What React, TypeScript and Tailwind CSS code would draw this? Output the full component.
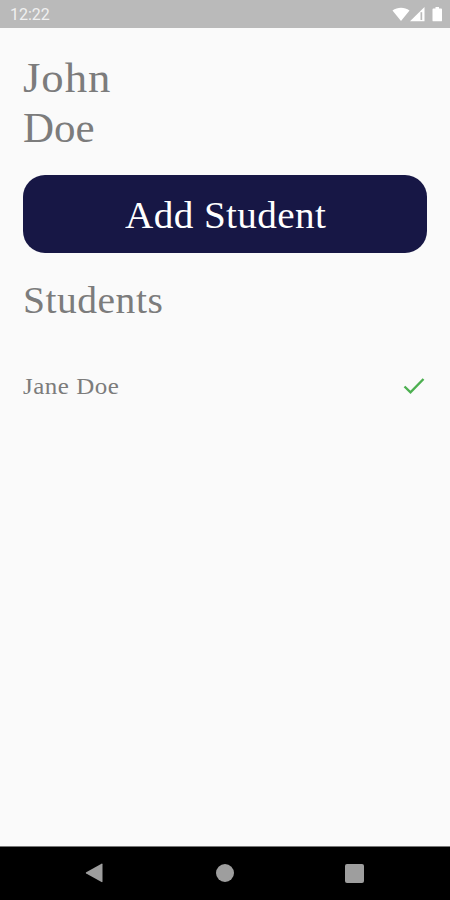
const students = [{ name: "Jane Doe", checkedIn: true }];

function StatusBar() {
  return (
    <div className="flex h-7 shrink-0 items-center justify-between bg-[#bababa] pl-[10px] pr-[7px] text-white">
      <span className="pt-[2px] font-[Roboto,sans-serif] text-[16px] leading-none text-[#f0f0f0]">
        12:22
      </span>
      <div className="flex items-center pt-px">
        <svg className="h-[15px] w-[18px]" viewBox="0 0 18 15" fill="currentColor">
          <path d="M.5 3.5C5.5-.3 12.5-.3 17.5 3.5L9 14z" />
        </svg>
        <svg className="h-[15px] w-[15px]" viewBox="0 0 15 15" fill="currentColor">
          <path d="M0 14.3 14.5 0v14.3z" />
          <path d="M10.5 5.2h1.7v7.8h-1.7z" fill="#bababa" />
        </svg>
        <svg className="ml-[7px] h-[15px] w-[11px]" viewBox="0 0 11 15" fill="currentColor">
          <path d="M3.5 0H7v1.5h2.2c.5 0 .8.4.8.9v11c0 .5-.3.9-.8.9H1.3c-.5 0-.8-.4-.8-.9v-11c0-.5.3-.9.8-.9h2.2z" />
        </svg>
      </div>
    </div>
  );
}

function NavigationBar() {
  return (
    <nav className="flex h-[54px] shrink-0 items-center justify-between border-t border-[#777] bg-black pb-px pl-[85px] pr-[86px] text-[#9e9e9e]">
      <svg className="h-5 w-5" viewBox="0 0 20 20" fill="currentColor">
        <path d="M1.2 9.3 16.5.7c.6-.3 1 0 1 .6v17.2c0 .6-.4.9-1 .6L1.2 10.5c-.5-.3-.5-.9 0-1.2z" />
      </svg>
      <div className="h-[18px] w-[18px] rounded-full bg-current" />
      <div className="h-[19px] w-[19px] rounded-[2px] bg-current" />
    </nav>
  );
}

export default function App() {
  return (
    <div className="flex h-screen w-full flex-col bg-[#fafafa] font-['Liberation_Serif',serif] text-[#7c7c7c]">
      <StatusBar />
      <main className="flex-1 px-[23px] pt-[25px]">
        <h1 className="w-[120px] text-[43px] leading-[50px]">
          <span className="block origin-left scale-x-[1.04] tracking-[0.9px]">John</span>
          <span className="block">Doe</span>
        </h1>
        <button className="mt-[22px] flex h-[78px] w-[404px] items-center justify-center rounded-[22px] bg-[#171745] pl-[2px] pt-[2px] text-[38px] text-white">
          <span className="scale-x-[1.03] tracking-[0.4px]">Add Student</span>
        </button>
        <h2 className="mt-[22px] origin-left scale-x-[1.04] text-[38px] leading-[50px] tracking-[0.5px]">
          Students
        </h2>
        <ul className="mt-[44px]">
          {students.map((student) => (
            <li key={student.name} className="flex h-[34px] items-center justify-between pr-[2px]">
              <span className="origin-left scale-x-[1.04] text-[24px] leading-none tracking-[0.5px]">
                {student.name}
              </span>
              {student.checkedIn && (
                <svg
                  className="h-[18px] w-[22px]"
                  viewBox="0 0 22 18"
                  fill="none"
                  stroke="#4caf50"
                  strokeWidth="2.4"
                >
                  <path d="M1.5 9.5 7.5 15.3 20.5 2" />
                </svg>
              )}
            </li>
          ))}
        </ul>
      </main>
      <NavigationBar />
    </div>
  );
}
